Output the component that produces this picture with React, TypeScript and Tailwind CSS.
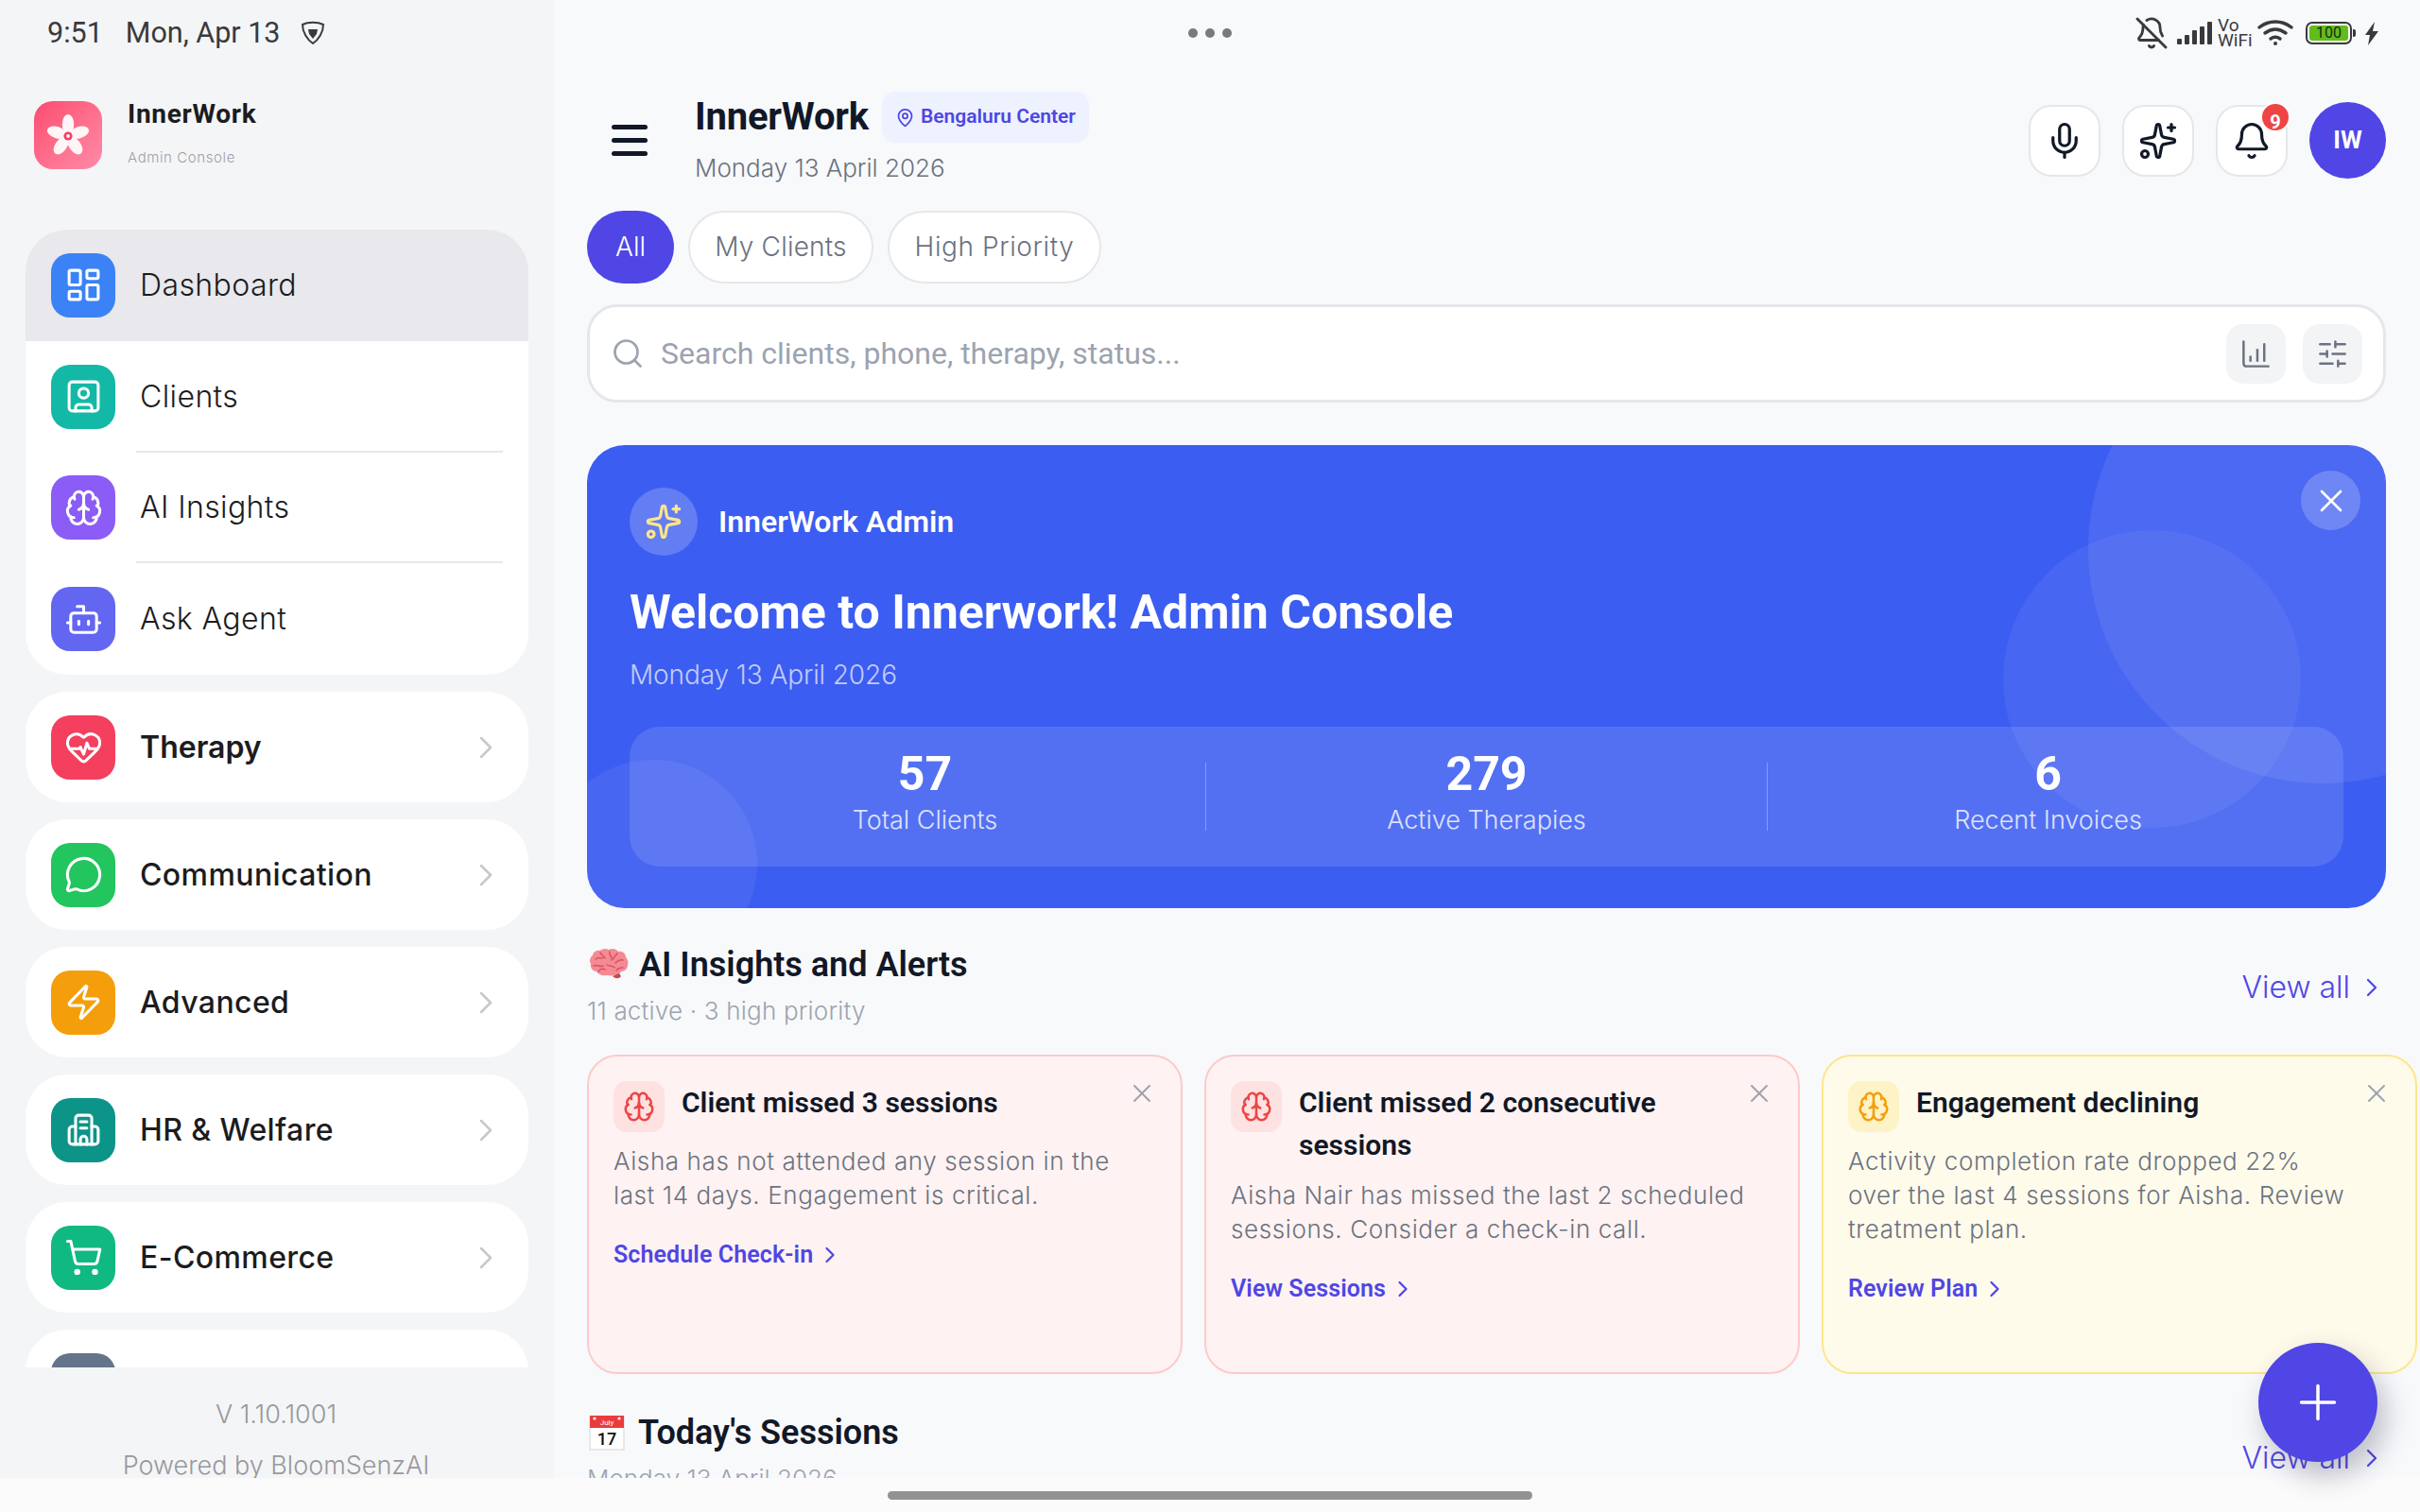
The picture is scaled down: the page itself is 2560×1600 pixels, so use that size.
import React from "react";
import {
  LayoutDashboard, SquareUser, Brain, Bot, HeartPulse, MessageCircle, Zap, ShoppingCart,
  ChevronRight, Mic, Sparkles, Bell, BellOff, Search, ChartColumnIncreasing, SlidersHorizontal, MapPin, X, Plus,
} from "lucide-react";

const M = "font-['Inter','Liberation_Sans',sans-serif]";
const R = "font-['Roboto','Liberation_Sans',sans-serif]";

function Offices({ size, strokeWidth, className }: { size?: number; strokeWidth?: number; className?: string }) {
  return (
    <svg width={size} height={size} viewBox="0 0 24 24" fill="none" stroke="currentColor" strokeWidth={strokeWidth} strokeLinecap="round" strokeLinejoin="round" className={className}>
      <path d="M7 21V5a2 2 0 0 1 2-2h6a2 2 0 0 1 2 2v16" />
      <path d="M7 10H5a2 2 0 0 0-2 2v7a2 2 0 0 0 2 2h14a2 2 0 0 0 2-2v-7a2 2 0 0 0-2-2h-2" />
      <path d="M10 7h4M10 11h4" />
      <path d="M10 21v-3a2 2 0 0 1 4 0v3" />
    </svg>
  );
}

function Tile({ bg, Icon }: { bg: string; Icon: any }) {
  return (
    <div className={`flex h-[68px] w-[68px] shrink-0 items-center justify-center rounded-[20px] ${bg}`}>
      <Icon size={41} strokeWidth={1.8} className="text-white" />
    </div>
  );
}

function GroupCard({ bg, Icon, label, weight }: { bg: string; Icon: any; label?: string; weight?: string }) {
  return (
    <div className="flex h-[117px] shrink-0 items-center rounded-[44px] bg-white pl-[27px] pr-[25px]">
      <Tile bg={bg} Icon={Icon} />
      <span className={`${M} ml-[26px] flex-1 text-[32px] text-[#1c1c1e] ${weight ?? "font-medium tracking-[0.4px]"}`}>{label}</span>
      <ChevronRight size={40} strokeWidth={1.5} className="text-[#c7c7cc]" />
    </div>
  );
}

function SideRow({ bg, Icon, label, active, line }: { bg: string; Icon: any; label: string; active?: boolean; line?: boolean }) {
  return (
    <div className={`relative flex h-[118px] items-center pl-[27px] ${active ? "bg-[#e8e8ed]" : ""}`}>
      <Tile bg={bg} Icon={Icon} />
      <span className={`${M} ml-[26px] text-[32px] font-light tracking-[0.4px] text-[#1c1c1e]`}>{label}</span>
      {line && <div className="absolute bottom-0 left-[117px] right-[27px] h-[2px] bg-[#e8e8ea]" />}
    </div>
  );
}

function BrainEmoji() {
  return (
    <svg width="42" height="36" viewBox="0 0 42 36" className="shrink-0">
      <path d="M21 2c-3-2-8-1-9 1-4-1-8 2-8 5-3 2-4 6-2 9-1 4 2 8 6 8 2 3 6 5 10 4 3 0 6 1 9 0 4 0 6-2 7-4 4 0 7-3 7-7 1-3 0-6-2-8 0-4-4-7-8-6-2-3-7-4-10-2z" fill="#f48a94" />
      <path d="M7 12c3-3 6 0 9-2M5 19c4-2 6 2 10 0M12 5c1 3 4 3 5 6M22 4c-1 4 3 5 2 9M30 6c-2 3-4 3-4 6M36 13c-3-1-6 1-8 3M10 25c2-3 5-3 7-2M19 18c3 2 5 0 8 3M36 21c-3 0-5 0-7 3" stroke="#d9535f" strokeWidth="1.5" fill="none" strokeLinecap="round" />
      <path d="M25 30c3 3 7 3 9 0l-2-3z" fill="#c8474f" />
    </svg>
  );
}

function CalendarEmoji() {
  return (
    <svg width="38" height="38" viewBox="0 0 38 38" className="mr-[3px] shrink-0">
      <rect x="1" y="2" width="36" height="35" fill="#fff" stroke="#d1d5db" />
      <rect x="1" y="1" width="36" height="13" fill="#ea3c3c" />
      <circle cx="6" cy="4" r="1.6" fill="#fff" />
      <circle cx="32" cy="4" r="1.6" fill="#fff" />
      <text x="19" y="11" textAnchor="middle" fontSize="8" fill="#fff" fontFamily="Roboto">July</text>
      <text x="19" y="32" textAnchor="middle" fontSize="18" fontWeight="500" fill="#111" fontFamily="Roboto">17</text>
    </svg>
  );
}

function Alert({ tone, title, desc, cta }: { tone: "red" | "amber"; title: string; desc: string[]; cta: string }) {
  const red = tone === "red";
  return (
    <div className={`relative h-[338px] w-[630px] shrink-0 rounded-[32px] border-[2.5px] pl-[26px] pr-[58px] pt-[26px] ${red ? "border-[#fecaca] bg-[#fef2f2]" : "border-[#fde68a] bg-[#fffbeb]"}`}>
      <X size={32} strokeWidth={1.4} className="absolute right-[25px] top-[23px] text-[#9ca3af]" />
      <div className="flex items-start gap-[18px]">
        <div className={`flex h-[54px] w-[54px] shrink-0 items-center justify-center rounded-[14px] ${red ? "bg-[#fee2e2]" : "bg-[#fef3c7]"}`}>
          <Brain size={34} strokeWidth={1.8} className={red ? "text-[#ef4444]" : "text-[#f59e0b]"} />
        </div>
        <div className={`${R} text-[30px] font-semibold leading-[45px] text-[#111827]`}>{title}</div>
      </div>
      <p className={`${M} mt-[13px] whitespace-nowrap text-[26px] font-light leading-[36px] tracking-[0.6px] text-[#6b7280]`}>
        {desc.map((line, i) => (
          <React.Fragment key={i}>
            {i > 0 && <br />}
            {line}
          </React.Fragment>
        ))}
      </p>
      <div className={`${R} mt-[30px] flex items-center gap-[4px] text-[25px] font-semibold leading-[30px] tracking-[0.1px] text-[#4f46e5]`}>
        {cta}
        <ChevronRight size={28} strokeWidth={1.9} />
      </div>
    </div>
  );
}

function SectionHead({ emoji, title, sub, subClass, linkClass }: { emoji: React.ReactNode; title: string; sub: string; subClass: string; linkClass: string }) {
  return (
    <div className="flex items-start justify-between pr-[35px]">
      <div>
        <div className="flex items-center gap-[11px] pl-[2px]">
          {emoji}
          <span className={`${R} text-[36px] font-semibold leading-[46px] text-[#111827]`}>{title}</span>
        </div>
        <div className={`${M} mt-[10px] text-[26px] font-light leading-[32px] ${subClass}`}>{sub}</div>
      </div>
      <div className={`${M} flex items-center gap-[7px] text-[32px] font-light leading-[36px] text-[#4f46e5] ${linkClass}`}>
        View all
        <ChevronRight size={32} strokeWidth={1.7} />
      </div>
    </div>
  );
}

function IconBtn({ children }: { children: React.ReactNode }) {
  return (
    <div className="relative flex h-[76px] w-[76px] items-center justify-center rounded-[24px] border-2 border-[#e5e7eb] bg-white text-[#111827]">
      {children}
    </div>
  );
}

function Stat({ value, label }: { value: string; label: string }) {
  return (
    <div className="flex flex-1 flex-col items-center pb-[10px]">
      <div className={`${R} text-[50px] font-bold leading-[56px] text-white`}>{value}</div>
      <div className={`${M} mt-[4px] text-[27px] font-light leading-[34px] text-white/80`}>{label}</div>
    </div>
  );
}

function StatusRight() {
  return (
    <div className="flex items-center text-[#3a3a3c]">
      <BellOff size={36} strokeWidth={1.9} />
      <svg width="37" height="24" viewBox="0 0 37 24" fill="#3a3a3c" className="ml-[9px]">
        <rect x="0" y="18" width="5" height="6" rx="1" />
        <rect x="8" y="14" width="5" height="10" rx="1" />
        <rect x="16" y="9" width="5" height="15" rx="1" />
        <rect x="24" y="5" width="5" height="19" rx="1" />
        <rect x="32" y="0" width="5" height="24" rx="1" />
      </svg>
      <div className={`${R} ml-[6px] w-[34px] text-[19px] font-normal leading-[16px] text-[#3a3a3c]`}>
        Vo
        <br />
        WiFi
      </div>
      <svg width="38" height="28" viewBox="0 0 38 28" fill="none" stroke="#3a3a3c" strokeWidth="3.4" strokeLinecap="round" className="ml-[8px]">
        <path d="M2 8c10-8 24-8 34 0" />
        <path d="M8 14c7-5 15-5 22 0" />
        <path d="M14 20c3-2 7-2 10 0" />
        <circle cx="19" cy="25" r="2" fill="#3a3a3c" stroke="none" />
      </svg>
      <div className="ml-[13px] flex items-center gap-[1px]">
        <div className="flex h-[24px] w-[49px] items-center rounded-[7px] border-2 border-[#3a3a3c] p-[2px]">
          <div className={`${R} flex h-full w-full items-center justify-center rounded-[3px] bg-[#62bd1c] text-[16px] leading-none text-[#1d2b10]`}>100</div>
        </div>
        <div className="h-[8px] w-[3px] rounded-r-[2px] bg-[#3a3a3c]" />
      </div>
      <svg width="14" height="25" viewBox="0 0 14 25" fill="#3a3a3c" className="ml-[10px]">
        <path d="M10 0 0 14h5l-2 11 11-15H8z" />
      </svg>
    </div>
  );
}

export default function App() {
  return (
    <div className="relative flex h-[1600px] w-[2560px] overflow-hidden bg-[#f8f9fb]">
      {/* Sidebar */}
      <aside className="flex h-full w-[586px] shrink-0 flex-col bg-[#f4f5f7]">
        <div className={`${R} flex h-[70px] items-center pl-[50px] text-[30.5px] text-[#3a3a3c]`}>
          <span>9:51</span>
          <span className="ml-[24px]">Mon, Apr 13</span>
          <svg width="26" height="26" viewBox="0 0 26 26" fill="none" stroke="#3a3a3c" strokeWidth="2" className="ml-[22px]">
            <path d="M2 4c6-3 16-3 22 0 0 8-5 16-11 20C7 20 2 12 2 4z" strokeLinejoin="round" />
            <path d="M8 9h10l-1 5-4 5-4-5z" fill="#3a3a3c" stroke="none" />
          </svg>
        </div>
        <div className="mt-[37px] flex items-start gap-[27px] pl-[36px]">
          <div className="flex h-[72px] w-[72px] items-center justify-center rounded-[20px] bg-gradient-to-br from-[#fb4a70] to-[#ff8ba8]">
            <svg width="44" height="44" viewBox="0 0 44 44">
              {[0, 72, 144, 216, 288].map((a) => (
                <ellipse key={a} cx="22" cy="10.5" rx="6.2" ry="10.5" fill="#fff5f7" transform={`rotate(${a} 22 23)`} />
              ))}
              <circle cx="22" cy="23" r="4.6" fill="#f0426a" />
              <circle cx="22" cy="23" r="1.9" fill="#fff5f7" />
            </svg>
          </div>
          <div>
            <div className={`${R} text-[28px] font-bold leading-[28px] tracking-[0.7px] text-[#1c1c1e]`}>InnerWork</div>
            <div className={`${M} mt-[23px] text-[15px] font-light leading-[18px] tracking-[0.6px] text-[#a0a0a5]`}>Admin Console</div>
          </div>
        </div>

        <div className="mx-[27px] mt-[64px] flex h-[1204px] flex-col gap-[18px] overflow-hidden">
          <div className="flex h-[471px] shrink-0 flex-col overflow-hidden rounded-[44px] bg-white">
            <SideRow bg="bg-[#3b82f6]" Icon={LayoutDashboard} label="Dashboard" active />
            <SideRow bg="bg-[#14b8a6]" Icon={SquareUser} label="Clients" line />
            <SideRow bg="bg-[#8b5cf6]" Icon={Brain} label="AI Insights" line />
            <SideRow bg="bg-[#6366f1]" Icon={Bot} label="Ask Agent" />
          </div>
          <GroupCard bg="bg-[#f43f5e]" Icon={HeartPulse} label="Therapy" weight="font-semibold" />
          <GroupCard bg="bg-[#22c55e]" Icon={MessageCircle} label="Communication" />
          <GroupCard bg="bg-[#f59e0b]" Icon={Zap} label="Advanced" />
          <GroupCard bg="bg-[#0d9488]" Icon={Offices} label="HR & Welfare" />
          <GroupCard bg="bg-[#10b981]" Icon={ShoppingCart} label="E-Commerce" />
          <GroupCard bg="bg-[#64748b]" Icon={SlidersHorizontal} />
        </div>

        <div className={`${M} mt-[34px] pr-[2px] text-center text-[27px] font-light leading-[32px] text-[#98989d]`}>
          <div>V 1.10.1001</div>
          <div className="mt-[22px]">Powered by BloomSenzAI</div>
        </div>
      </aside>

      {/* Main */}
      <main className="flex min-w-0 flex-1 flex-col pl-[35px]">
        <div className="h-[70px]" />

        <div className="flex h-[153px] items-start pr-[36px]">
          <div className="mt-[62px] flex w-[114px] flex-col gap-[9px] pl-[26px]">
            <span className="h-[5px] w-[38px] rounded-full bg-[#111827]" />
            <span className="h-[5px] w-[38px] rounded-full bg-[#111827]" />
            <span className="h-[5px] w-[38px] rounded-full bg-[#111827]" />
          </div>
          <div className="flex-1 pt-[27px]">
            <div className="flex items-center gap-[14px]">
              <span className={`${R} text-[40px] font-bold leading-[54px] tracking-[-0.2px] text-[#111827]`}>InnerWork</span>
              <span className={`${R} flex h-[54px] items-center gap-[6px] rounded-[14px] bg-[#eef2ff] px-[14px] text-[21px] font-semibold text-[#4f46e5]`}>
                <MapPin size={21} strokeWidth={2} />
                Bengaluru Center
              </span>
            </div>
            <div className={`${M} mt-[10px] text-[26px] font-light leading-[34px] text-[#6b7280]`}>Monday 13 April 2026</div>
          </div>
          <div className="mt-[38px] flex items-center gap-[23px]">
            <IconBtn><Mic size={42} strokeWidth={1.85} /></IconBtn>
            <IconBtn><Sparkles size={42} strokeWidth={1.85} /></IconBtn>
            <IconBtn>
              <Bell size={42} strokeWidth={1.85} />
              <span className={`${R} absolute right-[-5px] top-[-5px] flex h-[32px] w-[32px] items-start justify-center overflow-hidden rounded-full border-2 border-white bg-[#ef4444] pt-[10px] text-[20px] font-bold leading-[18px] text-white`}>9</span>
            </IconBtn>
            <div className={`${R} flex h-[81px] w-[81px] items-center justify-center rounded-full bg-[#4f46e5] text-[26px] font-bold text-white`}>IW</div>
          </div>
        </div>

        <div className="flex gap-[15px] pr-[36px]">
          <span className={`${M} flex h-[77px] w-[92px] items-center justify-center rounded-full bg-[#4f46e5] pb-[2px] text-[28px] font-light text-white`}>All</span>
          <span className={`${M} flex h-[77px] w-[196px] items-center justify-center rounded-full border-2 border-[#e5e7eb] bg-white pb-[2px] text-[28px] font-light tracking-[0.2px] text-[#6b7280]`}>My Clients</span>
          <span className={`${M} flex h-[77px] w-[226px] items-center justify-center rounded-full border-2 border-[#e5e7eb] bg-white pb-[2px] text-[28px] font-light tracking-[0.6px] text-[#6b7280]`}>High Priority</span>
        </div>

        <div className="mr-[36px] mt-[22px] flex h-[104px] items-center rounded-[32px] border-[3px] border-[#e5e7eb] bg-white pl-[22px] pr-[22px]">
          <Search size={36} strokeWidth={1.8} className="text-[#9ca3af]" />
          <span className={`${R} ml-[17px] flex-1 text-[32px] text-[#9ca3af]`}>Search clients, phone, therapy, status...</span>
          <div className="flex gap-[18px]">
            <div className="flex h-[63px] w-[63px] items-center justify-center rounded-[18px] bg-[#f3f4f6] text-[#6b7280]">
              <ChartColumnIncreasing size={35} strokeWidth={1.7} />
            </div>
            <div className="flex h-[63px] w-[63px] items-center justify-center rounded-[18px] bg-[#f3f4f6] text-[#6b7280]">
              <SlidersHorizontal size={35} strokeWidth={1.7} />
            </div>
          </div>
        </div>

        {/* Banner */}
        <section className="relative mr-[36px] mt-[45px] h-[490px] shrink-0 overflow-hidden rounded-[40px] bg-[#3c5df1] px-[45px] pt-[45px]">
          <div className="absolute left-[1588px] top-[-138px] h-[496px] w-[496px] rounded-full bg-white/[0.08]" />
          <div className="absolute left-[1498px] top-[90px] h-[315px] w-[315px] rounded-full bg-white/[0.06]" />
          <div className="absolute left-[-40px] top-[333px] h-[220px] w-[220px] rounded-full bg-white/[0.06]" />
          <div className="absolute right-[27px] top-[27px] flex h-[63px] w-[63px] items-center justify-center rounded-full bg-white/20 text-white">
            <X size={40} strokeWidth={1.6} />
          </div>
          <div className="relative flex items-center gap-[22px]">
            <div className="flex h-[72px] w-[72px] items-center justify-center rounded-full bg-white/20">
              <Sparkles size={40} strokeWidth={1.9} className="text-[#fde68a]" />
            </div>
            <span className={`${R} text-[32px] font-semibold text-white`}>InnerWork Admin</span>
          </div>
          <h1 className={`${R} relative mt-[28px] text-[50px] font-bold leading-[64px] text-white`}>Welcome to Innerwork! Admin Console</h1>
          <div className={`${M} relative mt-[16px] text-[28px] font-light leading-[36px] tracking-[-0.1px] text-white/70`}>Monday 13 April 2026</div>
          <div className="relative mt-[37px] flex h-[148px] items-center rounded-[32px] bg-white/[0.12] px-[16px]">
            <Stat value="57" label="Total Clients" />
            <div className="h-[72px] w-[1px] bg-white/30" />
            <Stat value="279" label="Active Therapies" />
            <div className="h-[72px] w-[1px] bg-white/30" />
            <Stat value="6" label="Recent Invoices" />
          </div>
        </section>

        <div className="mt-[37px]">
          <SectionHead emoji={<BrainEmoji />} title="AI Insights and Alerts" sub="11 active · 3 high priority" subClass="tracking-[0.2px] text-[#9ca3af]" linkClass="mt-[29px]" />
        </div>

        <div className="mt-[30px] flex gap-[23px]">
          <Alert tone="red" title="Client missed 3 sessions" desc={["Aisha has not attended any session in the", "last 14 days. Engagement is critical."]} cta="Schedule Check-in" />
          <Alert tone="red" title="Client missed 2 consecutive sessions" desc={["Aisha Nair has missed the last 2 scheduled", "sessions. Consider a check-in call."]} cta="View Sessions" />
          <Alert tone="amber" title="Engagement declining" desc={["Activity completion rate dropped 22%", "over the last 4 sessions for Aisha. Review", "treatment plan."]} cta="Review Plan" />
        </div>

        <div className="mt-[39px]">
          <SectionHead emoji={<CalendarEmoji />} title="Today's Sessions" sub="Monday 13 April 2026" subClass="text-[#9ca3af]" linkClass="mt-[32px]" />
        </div>
      </main>

      {/* Camera-cutout dots and status icons, over the page */}
      <div className="absolute left-[1257px] top-[30px] flex gap-[8px]">
        <span className="h-[10px] w-[10px] rounded-full bg-[#7a7a7a]" />
        <span className="h-[10px] w-[10px] rounded-full bg-[#7a7a7a]" />
        <span className="h-[10px] w-[10px] rounded-full bg-[#7a7a7a]" />
      </div>
      <div className="absolute right-[44px] top-[17px]">
        <StatusRight />
      </div>

      {/* System navigation bar */}
      <div className="absolute bottom-0 left-0 flex h-[36px] w-full justify-center bg-[#fbfbfb] pt-[14px]">
        <div className="h-[9px] w-[682px] rounded-full bg-[#929292]" />
      </div>

      {/* Floating action button */}
      <div className="absolute left-[2389px] top-[1421px] flex h-[126px] w-[126px] items-center justify-center rounded-full bg-[#4f46e5] text-white shadow-[8px_14px_30px_rgba(30,30,60,0.28)]">
        <Plus size={60} strokeWidth={1.4} />
      </div>
    </div>
  );
}
